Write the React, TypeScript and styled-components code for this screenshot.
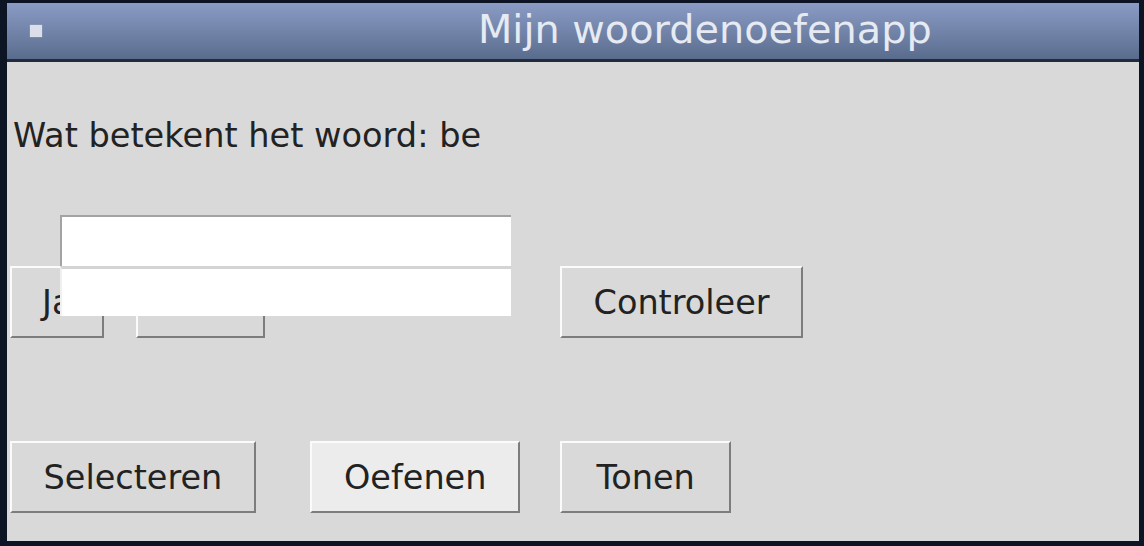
import React from "react";
import styled, { createGlobalStyle } from "styled-components";

const Global = createGlobalStyle`
  html, body { margin: 0; padding: 0; background: #0d1424; }
  body { font-family: "DejaVu Sans", sans-serif; }
`;

const Frame = styled.div`
  width: 1144px;
  height: 546px;
  box-sizing: border-box;
  background: #0d1424;
  padding: 3px 5px 5px 7px;
  display: flex;
  flex-direction: column;
`;

const TitleBar = styled.div`
  height: 56px;
  flex: none;
  background: linear-gradient(#8a9cc5, #5a6c8d);
  border-bottom: 3px solid #222b3c;
  display: flex;
  align-items: center;
`;

const WinIcon = styled.div`
  width: 12px;
  height: 12px;
  margin-left: 23px;
  background: #dcdfe9;
  box-shadow: 0 0 1px #c0c6d6;
`;

const Title = styled.div`
  margin-left: 436px;
  font-family: "DejaVu Sans", sans-serif;
  font-size: 39.8px;
  color: #e6eaf2;
  white-space: nowrap;
  line-height: 1;
  margin-top: -2px;
`;

const Body = styled.div`
  flex: 1;
  background: #d9d9d9;
  padding: 55px 0 0 3px;
  display: flex;
  flex-direction: column;
`;

const Question = styled.div`
  font-size: 33.6px;
  color: #222;
  padding-left: 3px;
  line-height: 38px;
  white-space: nowrap;
`;

const Grid = styled.div`
  display: grid;
  grid-template-columns: 300px 250px auto;
  row-gap: 103px;
  margin-top: 111px;
  align-items: start;
`;

const Cell = styled.div<{ $gap?: number }>`
  display: flex;
  gap: ${(p) => p.$gap ?? 0}px;
  position: relative;
`;

const Button = styled.div<{ $active?: boolean; $px?: number }>`
  box-sizing: border-box;
  height: 72px;
  padding: 0 ${(p) => p.$px ?? 31}px;
  display: flex;
  align-items: center;
  justify-content: center;
  font-size: 33.5px;
  color: #222;
  white-space: nowrap;
  background: ${(p) => (p.$active ? "#ececec" : "#d9d9d9")};
  border: 2px solid;
  border-color: #fbfbfb #7d7d7d #7d7d7d #fbfbfb;
`;

const EntryStack = styled.div`
  position: absolute;
  left: 50px;
  top: -51px;
  width: 451px;
  display: flex;
  flex-direction: column;
`;

const Entry = styled.div<{ $first?: boolean }>`
  height: ${(p) => (p.$first ? 49 : 47)}px;
  background: #ffffff;
  border-top: ${(p) => (p.$first ? "2px solid #a3a3a3" : "3px solid #d4d4d4")};
  border-left: 2px solid ${(p) => (p.$first ? "#a3a3a3" : "#f0f0f0")};
`;

export default function App() {
  return (
    <>
      <Global />
      <Frame>
        <TitleBar>
          <WinIcon />
          <Title>Mijn woordenoefenapp</Title>
        </TitleBar>
        <Body>
          <Question>Wat betekent het woord: be</Question>
          <Grid>
            <Cell $gap={32}>
              <Button $px={30}>Ja</Button>
              <Button $px={29}>Nee</Button>
              <EntryStack>
                <Entry $first />
                <Entry />
              </EntryStack>
            </Cell>
            <div />
            <Cell>
              <Button $px={31.5}>Controleer</Button>
            </Cell>
            <Cell>
              <Button $px={31.5}>Selecteren</Button>
            </Cell>
            <Cell>
              <Button $active $px={32}>Oefenen</Button>
            </Cell>
            <Cell>
              <Button $px={34.5}>Tonen</Button>
            </Cell>
          </Grid>
        </Body>
      </Frame>
    </>
  );
}
